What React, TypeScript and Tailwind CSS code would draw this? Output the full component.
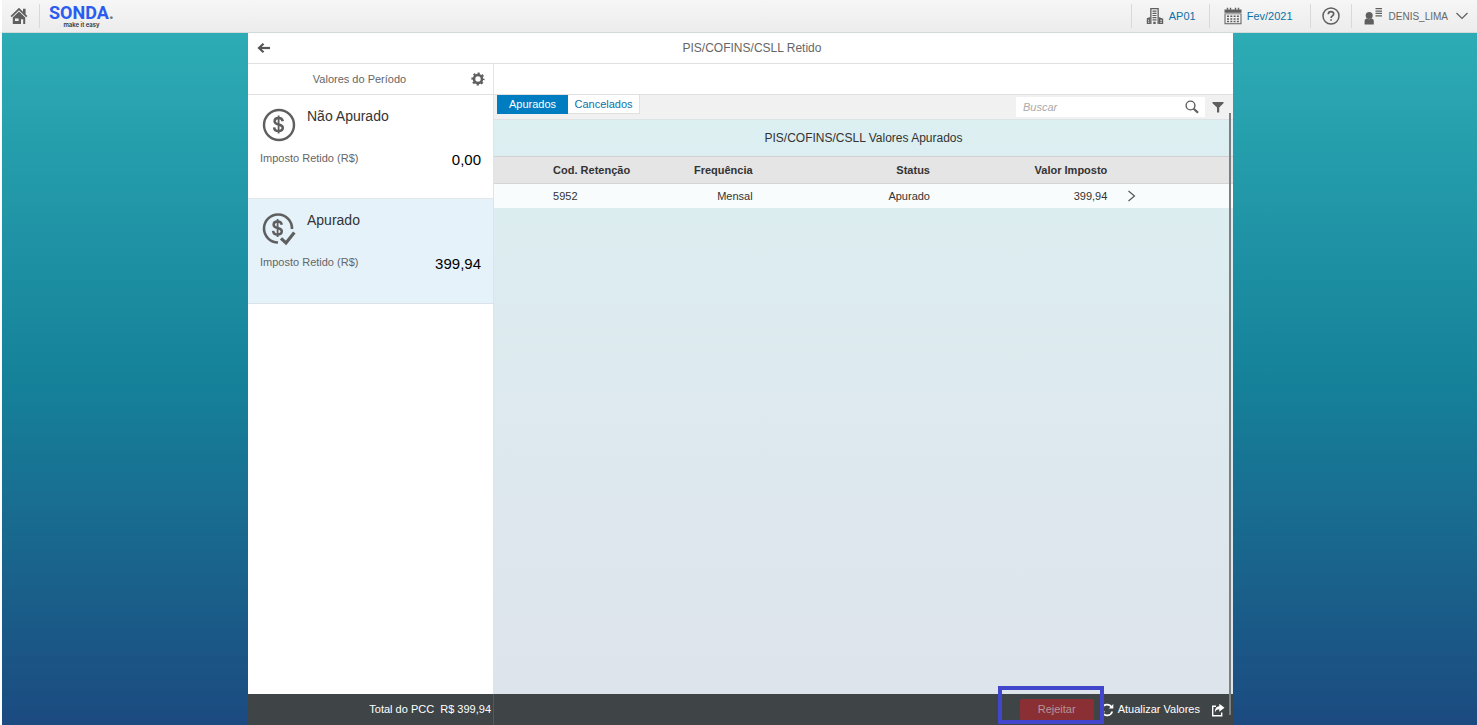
import type { ReactNode } from "react";

interface PeriodItem {
  title: string;
  value: string;
  selected: boolean;
  icon: ReactNode;
}

function HomeIcon() {
  return (
    <svg width="18" height="18" viewBox="0 0 18 18" fill="#5f5f5f">
      <path d="M9 .8 .6 9l1.200 1.200L9 3.300l7.200 6.900L17.400 9 15.600 7.200V1.800H13v2.900z" />
      <path d="M9 4.600 2.800 10.500V17H11v-4.800h2.200V17h2V10.500zM5 11.400h3.600v2.600H5z" fillRule="evenodd" />
    </svg>
  );
}

function BuildingIcon() {
  return (
    <svg width="18" height="18" viewBox="0 0 18 18" fill="#5f5f5f">
      <path d="M4.200 1h8.600v16h-1.300V2.200h-6V17H4.200z" />
      <path d="M6.500 3.500h4v1.200h-4zM6.500 5.700h4v1.200h-4zM6.500 7.900h4v1.200h-4zM6.500 10.100h4v1.200h-4zM6.500 12.300h4v1.200h-4zM7.300 14.700h2.400V17H7.300z" />
      <path d="M.8 11.300 4.200 10v7H.8zM2 12.800v1h1.200v-1zM2 14.800v1h1.200v-1z" fillRule="evenodd" />
      <path d="M12.800 10l4.400 1.800V17h-4.400zM14.300 12.800v1h1.600v-1zM14.300 14.800v1h1.600v-1z" fillRule="evenodd" />
    </svg>
  );
}

function CalendarIcon() {
  return (
    <svg width="18" height="18" viewBox="0 0 18 18" fill="#5f5f5f">
      <path d="M.5 2.500h17v3.300H.5z" />
      <path d="M2.800.8h1.400v2H2.800zM5.800.8h1.400v2H5.800zM10.800.8h1.400v2h-1.400zM13.800.8h1.400v2h-1.400z" />
      <path d="M.5 6.500h17v10.700H.5zM1.500 7.300v9h15v-9z" fillRule="evenodd" />
      <path d="M3 8.500h2v1.500H3zM6.300 8.500h2v1.500h-2zM9.600 8.500h2v1.500h-2zM12.900 8.500h2v1.500h-2zM3 11.200h2v1.500H3zM6.300 11.200h2v1.500h-2zM9.600 11.200h2v1.500h-2zM12.900 11.200h2v1.500h-2zM3 13.800h2v1.500H3zM6.300 13.800h2v1.500h-2zM9.600 13.800h2v1.500h-2zM12.900 13.800h2v1.500h-2z" />
    </svg>
  );
}

function HelpIcon() {
  return (
    <svg width="18" height="18" viewBox="0 0 18 18" fill="none" stroke="#5f5f5f">
      <circle cx="9" cy="9" r="8" strokeWidth="1.500" />
      <path d="M6.300 7.200c0-3.300 5.400-3.300 5.400-.2 0 1.900-2.600 1.900-2.600 4" strokeWidth="1.700" />
      <path d="M8.200 13h1.700" strokeWidth="1.700" />
    </svg>
  );
}

function UserIcon() {
  return (
    <svg width="19" height="18" viewBox="0 0 19 18" fill="#5f5f5f">
      <circle cx="5.200" cy="8.500" r="3.500" />
      <path d="M.6 17.500v-3.200c0-1.800 1-2.800 2.600-2.800.9.900 3.100.9 4 0 1.700 0 2.600 1 2.600 2.800v3.200z" />
      <path d="M11.500 1H18v1.300h-6.500zM11.500 3.400H18v1.300h-6.500zM11.500 5.800H18v1.300h-6.500zM11.500 8.200H18v1.200h-6.500z" />
    </svg>
  );
}

function BackIcon() {
  return (
    <svg width="14" height="12" viewBox="0 0 14 12" fill="none" stroke="#555" strokeWidth="2.200">
      <path d="M13 6H2.500" />
      <path d="M6.500 1.700 2 6l4.500 4.300" />
    </svg>
  );
}

function GearIcon() {
  return (
    <svg width="14" height="14" viewBox="0 0 14 14" fill="none" stroke="#5f5f5f">
      <circle cx="7" cy="7" r="4" strokeWidth="2.600" />
      <circle cx="7" cy="7" r="5.600" strokeWidth="2" strokeDasharray="2.200 2.198" strokeDashoffset="1.100" />
    </svg>
  );
}

function Dollar() {
  return (
    <>
      <path d="M20.800 13.300c-.4-2.300-2-3.300-4.200-3.300-2.400 0-4 1.200-4 3.200 0 4.600 8.200 2 8.200 6.600 0 2-1.800 3.200-4.200 3.200-2.600 0-4.300-1.200-4.500-3.700" strokeWidth="2.500" />
      <path d="M16.600 7.500v18" strokeWidth="1.800" />
    </>
  );
}

function MoneyIcon() {
  return (
    <svg width="34" height="34" viewBox="0 0 34 34" fill="none" stroke="#5f5f5f">
      <circle cx="17" cy="17" r="15" strokeWidth="2.400" />
      <Dollar />
    </svg>
  );
}

function MoneyCheckIcon() {
  return (
    <svg width="34" height="34" viewBox="0 0 34 34" fill="none" stroke="#5f5f5f">
      <path d="M30 17A14 14 0 1 0 16 30.500" strokeWidth="2.600" />
      <path d="M19 26.300l5 4.700 8.300-10.500" strokeWidth="3.200" />
      <g transform="translate(-1 -.500)">
        <Dollar />
      </g>
    </svg>
  );
}

function SearchIcon() {
  return (
    <svg width="14" height="14" viewBox="0 0 14 14" fill="none" stroke="#5f5f5f">
      <circle cx="5.500" cy="5.500" r="4.400" strokeWidth="1.400" />
      <path d="M8.700 8.700 13 12.700" strokeWidth="2.200" />
    </svg>
  );
}

function FilterIcon() {
  return (
    <svg width="12" height="12" viewBox="0 0 12 12" fill="#5f5f5f">
      <path d="M.5 1h11v1.200L7.200 6.500v5H5V6.500L.5 2.200z" />
    </svg>
  );
}

function RefreshIcon() {
  return (
    <svg width="14" height="14" viewBox="0 0 14 14" fill="none" stroke="#fff" strokeWidth="1.600">
      <path d="M1.700 5.500a5.500 5.500 0 0 1 10-1.200M12.300 8.500a5.500 5.500 0 0 1-10 1.200" />
      <path d="M13.300 1v4.500H8.800zM.7 13V8.500h4.500z" fill="#fff" stroke="none" />
    </svg>
  );
}

function ShareIcon() {
  return (
    <svg width="14" height="14" viewBox="0 0 14 14">
      <path d="M5 3.300H1.700v9.500h9V9.500" fill="none" stroke="#fff" strokeWidth="1.400" />
      <path d="M8.300.8 13.500 4.800 8.300 8.800V6.300C6 6.300 4.700 7.300 4 9.500 3.800 5.800 5.300 3.500 8.300 3.300z" fill="#fff" />
    </svg>
  );
}

const periodItems: PeriodItem[] = [
  { title: "Não Apurado", value: "0,00", selected: false, icon: <MoneyIcon /> },
  { title: "Apurado", value: "399,94", selected: true, icon: <MoneyCheckIcon /> },
];

function TopBar() {
  return (
    <header className="flex h-[33px] items-center justify-between border-b border-[#d4d9da] bg-gradient-to-b from-[#f6f6f6] to-[#ececec]">
      <div className="flex items-center">
        <button aria-label="Início" className="flex h-6 w-[38px] items-center border-r border-[#d9d9d9] pl-2">
          <HomeIcon />
        </button>
        <a href="#" className="flex flex-col items-center pt-0.5 pl-[9px] text-[#2a5cf0]">
          <span className="font-[Roboto,sans-serif] text-[18px] leading-4 font-bold">
            SONDA<span className="text-[#777]">.</span>
          </span>
          <span className="font-[Inter,sans-serif] text-[6px] leading-2 font-semibold text-[#333]">
            make it easy
          </span>
        </a>
      </div>
      <nav className="flex items-center text-[11px] text-[#0c71a8]">
        <button className="flex h-6 items-center gap-[5px] border-l border-[#d9d9d9] pr-[13px] pl-3.5">
          <BuildingIcon />
          AP01
        </button>
        <button className="flex h-6 items-center gap-[5px] border-l border-[#d9d9d9] pr-[17px] pl-3.5">
          <CalendarIcon />
          Fev/2021
        </button>
        <button aria-label="Ajuda" className="flex h-6 items-center border-l border-[#d9d9d9] px-[11px]">
          <HelpIcon />
        </button>
        <button className="flex h-6 items-center border-l border-[#d9d9d9] pr-[9px] pl-3 text-[10px] text-[#666]">
          <UserIcon />
          <span className="pr-2 pl-1.5">DENIS_LIMA</span>
          <svg width="12" height="8" viewBox="0 0 12 8" fill="none" stroke="#5f5f5f">
            <path d="M.5 1 6 6.500 11.500 1" strokeWidth="1.200" />
          </svg>
        </button>
      </nav>
    </header>
  );
}

function PeriodList() {
  return (
    <aside className="flex flex-col border-r border-[#e3e3e3] bg-white">
      <div className="flex h-[31px] items-center border-b border-[#e0e0e0] pr-2">
        <h2 className="flex-1 text-center text-[11px] text-[#666]">Valores do Período</h2>
        <button aria-label="Configurações">
          <GearIcon />
        </button>
      </div>
      <ul>
        {periodItems.map((item) => (
          <li key={item.title}>
            <button
              className={
                item.selected
                  ? "block h-[105px] w-full border-b border-[#dbe3e8] bg-[#e5f2fa] px-3 text-left"
                  : "block h-[104px] w-full border-b border-[#e3e8ea] bg-white px-3 text-left"
              }
            >
              <span className="flex h-full flex-col">
                <span className="flex gap-[11px] pt-[13px] pl-0.5">
                  {item.icon}
                  <span className="text-[14px] leading-4 text-[#333]">{item.title}</span>
                </span>
                <span className="flex items-center justify-between pt-1">
                  <span className="text-[11px] text-[#666]">Imposto Retido (R$)</span>
                  <span className="pt-1 text-[15px] leading-5 text-black">{item.value}</span>
                </span>
              </span>
            </button>
          </li>
        ))}
      </ul>
    </aside>
  );
}

function ValuesTable() {
  return (
    <table className="w-full table-fixed text-right text-[11px] text-[#333]">
      <caption className="h-[37px] border-b border-[#d0d0d0] text-[12px] leading-9">
        PIS/COFINS/CSLL Valores Apurados
      </caption>
      <colgroup>
        <col className="w-[8%]" />
        <col className="w-[11%]" />
        <col className="w-[16%]" />
        <col className="w-[24%]" />
        <col className="w-[24%]" />
        <col className="w-[17%]" />
      </colgroup>
      <thead className="bg-[#e5e5e5]">
        <tr className="h-[26px] border-b border-[#d5d5d5]">
          <td />
          <th className="text-left">Cod. Retenção</th>
          <th>Frequência</th>
          <th>Status</th>
          <th>Valor Imposto</th>
          <td />
        </tr>
      </thead>
      <tbody className="bg-[#f8fcfd]">
        <tr className="h-[25px]">
          <td />
          <td className="text-left">5952</td>
          <td>Mensal</td>
          <td>Apurado</td>
          <td>399,94</td>
          <td className="pl-5 text-left">
            <button aria-label="Abrir detalhes" className="block">
              <svg width="9" height="12" viewBox="0 0 9 12" fill="none" stroke="#555">
                <path d="M1.500 1 7.500 6l-6 5" strokeWidth="1.200" />
              </svg>
            </button>
          </td>
        </tr>
      </tbody>
    </table>
  );
}

function Detail() {
  return (
    <section className="relative flex flex-col bg-gradient-to-b from-[#dcf0f2] to-[#dee4ec]">
      <div className="h-[31px] border-b border-[#e0e0e0] bg-white" />
      <div className="flex h-[25px] justify-between border-b border-[#dde3e4] bg-[#f1f1f1] pl-[3px]">
        <div className="flex h-[19px] text-[11px]">
          <button className="w-[71px] border-b border-[#007cc0] bg-[#007cc0] text-white">Apurados</button>
          <button className="w-[72px] border-r border-b border-[#e0e0e0] bg-white text-[#0c71a8]">
            Cancelados
          </button>
        </div>
        <div className="flex items-center gap-[7px] pr-[9px]">
          <label className="flex h-5 w-[189px] items-center bg-white pr-1.5 pl-[7px]">
            <input
              type="search"
              aria-label="Buscar"
              placeholder="Buscar"
              className="min-w-0 flex-1 text-[11px] outline-none placeholder:text-[#aaa] placeholder:italic"
            />
            <SearchIcon />
          </label>
          <button aria-label="Filtrar">
            <FilterIcon />
          </button>
        </div>
      </div>
      <ValuesTable />
      {/* scrollbar thumb, runs down over the footer */}
      <div className="absolute top-[49px] right-0.5 -bottom-[21px] z-10 w-0.5 bg-[#7c8082]" />
    </section>
  );
}

function Footer() {
  return (
    <footer className="grid h-[31px] grid-cols-[246px_1fr] bg-[#3f4547] text-[11px] text-white">
      <div className="flex items-center justify-end border-r border-[#53595b] pr-0.5 whitespace-pre">
        Total do PCC  R$ 399,94
      </div>
      <div className="flex items-center justify-end pr-2">
        <div className="relative">
          <button className="block h-[21px] w-[74px] rounded-xs bg-[#8a3035] text-[#b39697]">Rejeitar</button>
          <div className="pointer-events-none absolute -top-[13px] -right-2.5 -bottom-1 -left-[22px] z-10 border-4 border-[#4146cc]" />
        </div>
        <button className="flex items-center gap-1 pl-1.5">
          <RefreshIcon />
          Atualizar Valores
        </button>
        <button aria-label="Compartilhar" className="pl-[11px]">
          <ShareIcon />
        </button>
      </div>
    </footer>
  );
}

export default function App() {
  return (
    <div className="flex min-h-screen flex-col bg-white pl-0.5 font-['Liberation_Sans',Arial,sans-serif]">
      <TopBar />
      <div className="grid flex-1 grid-cols-[246fr_985fr_244fr] bg-gradient-to-b from-[#2dacb5] via-[#15829a] to-[#1b4a80]">
        <main className="col-start-2 flex flex-col">
          <div className="flex h-[31px] items-center border-b border-[#e0e0e0] bg-white pl-[9px]">
            <button aria-label="Voltar">
              <BackIcon />
            </button>
            <h1 className="flex-1 text-center text-[12px] text-[#666]">PIS/COFINS/CSLL Retido</h1>
          </div>
          <div className="grid flex-1 grid-cols-[246px_1fr]">
            <PeriodList />
            <Detail />
          </div>
          <Footer />
        </main>
      </div>
    </div>
  );
}
